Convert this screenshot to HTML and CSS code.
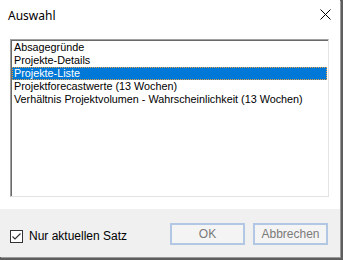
FILE: index.html
```html
<!DOCTYPE html>
<html lang="de">
<head>
    <meta charset="UTF-8">
    <title>Auswahl</title>
    <link rel="stylesheet" href="styles.css">
</head>
<body>

<div class="dialog">
    <div class="title-bar">
        <span class="title">Auswahl</span>
        <span class="close">
            <svg width="11" height="11" viewBox="0 0 11 11">
                <path d="M0.5 0.5 L10.5 10.5 M10.5 0.5 L0.5 10.5" stroke="#000" stroke-width="1" fill="none"/>
            </svg>
        </span>
    </div>

    <div class="content">
        <ul class="list">
            <li>Absagegründe</li>
            <li>Projekte-Details</li>
            <li class="selected">Projekte-Liste</li>
            <li>Projektforecastwerte (13 Wochen)</li>
            <li>Verhältnis Projektvolumen - Wahrscheinlichkeit (13 Wochen)</li>
        </ul>
    </div>

    <div class="footer">
        <label class="check">
            <span class="box">
                <svg width="11" height="11" viewBox="0 0 11 11">
                    <path d="M1.5 5.5 L4 8 L9.5 2.5" stroke="#333" stroke-width="1.2" fill="none"/>
                </svg>
            </span>
            Nur aktuellen Satz
        </label>
        <div class="buttons">
            <button>OK</button>
            <button>Abbrechen</button>
        </div>
    </div>
</div>

</body>
</html>
```

FILE: styles.css
```css
body {
    margin: 0;
    width: 343px;
    height: 260px;
    background-color: #5e5e5e;
    font-family: "Liberation Sans", Arial, sans-serif;
    overflow: hidden;
}
.dialog {
    width: 340px;
    height: 257px;
    background: #fff;
    display: flex;
    flex-direction: column;
    box-shadow: 1px 1px 0 #9a9a9a;
}
.title-bar {
    height: 39px;
    display: flex;
    justify-content: space-between;
    align-items: flex-start;
}
.title {
    margin: 7px 0 0 8px;
    font-family: "Noto Sans", "Liberation Sans", sans-serif;
    font-size: 12px;
    color: #000;
}
.close {
    margin: 9px 9px 0 0;
    display: flex;
}
.content {
    padding: 0 11px 12px 10px;
}
.list {
    list-style: none;
    margin: 0;
    padding: 1px 1px 0 1px;
    height: 155px;
    border: 1px solid;
    border-color: #a0a0a0 #e3e3e3 #e3e3e3 #a0a0a0;
    box-shadow: inset 1px 1px 0 #696969;
}
.list li {
    height: 13px;
    line-height: 13px;
    font-size: 10.8px;
    padding-left: 2px;
    color: #000;
    white-space: nowrap;
}
.list li.selected {
    background: #0078d7;
    color: #fff;
    outline: 1px dotted #e8a040;
    outline-offset: -1px;
}
.footer {
    flex: 1;
    background: #f0f0f0;
    display: flex;
    justify-content: space-between;
    align-items: flex-start;
    padding: 14px 12px 0 10px;
}
.check {
    display: flex;
    align-items: center;
    gap: 6px;
    margin-top: 6px;
    font-size: 12px;
    color: #000;
}
.box {
    width: 11px;
    height: 11px;
    border: 1px solid #333;
    background: #fff;
    display: flex;
}
.buttons {
    display: flex;
    gap: 8px;
}
button {
    width: 75px;
    height: 22px;
    background: #f4f4f4;
    border: 2px solid #b1c7e3;
    font-family: "Liberation Sans", Arial, sans-serif;
    font-size: 12px;
    color: #7a7a7a;
    padding: 0;
}
```
